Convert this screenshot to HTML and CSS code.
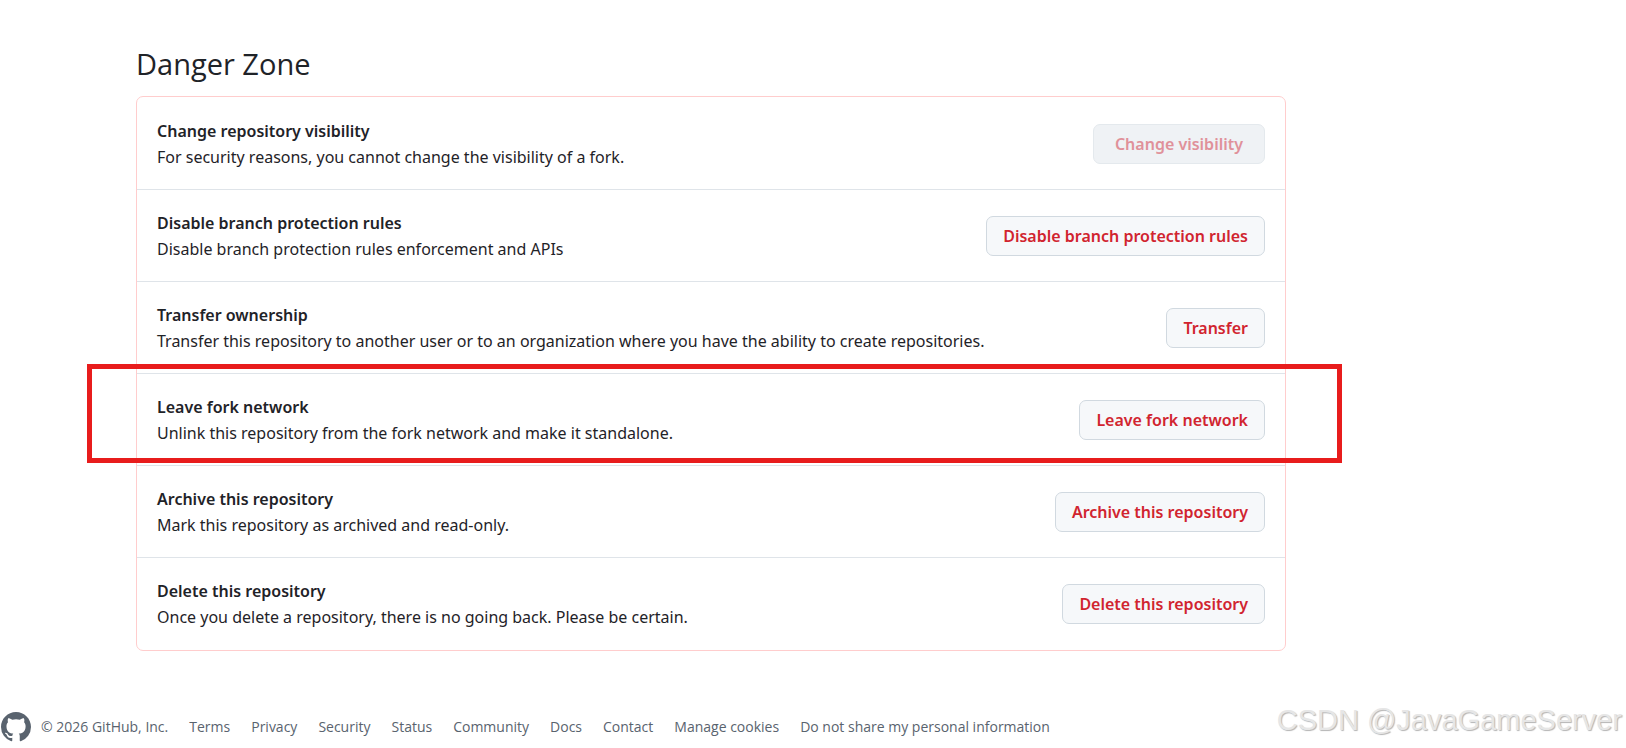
FILE: index.html
```html
<!DOCTYPE html>
<html lang="en">
<head>
  <meta charset="UTF-8" />
  <meta name="viewport" content="width=device-width, initial-scale=1.0"/>
  <title>Repository settings</title>
  <link rel="stylesheet" href="styles.css">
</head>
<body>

  <main class="settings">
    <h2 class="settings-title">Danger Zone</h2>

    <ul class="danger-box">
      <li class="danger-row">
        <div class="danger-text">
          <strong>Change repository visibility</strong>
          <p>For security reasons, you cannot change the visibility of a fork.</p>
        </div>
        <button class="btn btn-wide" type="button" disabled>Change visibility</button>
      </li>
      <li class="danger-row">
        <div class="danger-text">
          <strong>Disable branch protection rules</strong>
          <p>Disable branch protection rules enforcement and APIs</p>
        </div>
        <button class="btn" type="button">Disable branch protection rules</button>
      </li>
      <li class="danger-row">
        <div class="danger-text">
          <strong>Transfer ownership</strong>
          <p>Transfer this repository to another user or to an organization where you have the ability to create repositories.</p>
        </div>
        <button class="btn" type="button">Transfer</button>
      </li>
      <li class="danger-row marked">
        <div class="danger-text">
          <strong>Leave fork network</strong>
          <p>Unlink this repository from the fork network and make it standalone.</p>
        </div>
        <button class="btn" type="button">Leave fork network</button>
      </li>
      <li class="danger-row">
        <div class="danger-text">
          <strong>Archive this repository</strong>
          <p>Mark this repository as archived and read-only.</p>
        </div>
        <button class="btn" type="button">Archive this repository</button>
      </li>
      <li class="danger-row">
        <div class="danger-text">
          <strong>Delete this repository</strong>
          <p>Once you delete a repository, there is no going back. Please be certain.</p>
        </div>
        <button class="btn" type="button">Delete this repository</button>
      </li>
    </ul>
  </main>

  <footer class="footer">
    <a class="footer-logo" href="#" aria-label="GitHub">
      <svg viewBox="0 0 16 16" width="30" height="30" aria-hidden="true">
        <path fill="currentColor" d="M8 0c4.42 0 8 3.58 8 8a8.013 8.013 0 0 1-5.45 7.59c-.4.08-.55-.17-.55-.38 0-.27.01-1.13.01-2.2 0-.75-.25-1.23-.54-1.48 1.78-.2 3.65-.88 3.65-3.95 0-.88-.31-1.59-.82-2.15.08-.2.36-1.02-.08-2.12 0 0-.67-.22-2.2.82-.64-.18-1.32-.27-2-.27-.68 0-1.36.09-2 .27-1.53-1.03-2.2-.82-2.2-.82-.44 1.1-.16 1.92-.08 2.12-.51.56-.82 1.28-.82 2.15 0 3.06 1.86 3.75 3.64 3.95-.23.2-.44.55-.51 1.07-.46.21-1.61.55-2.33-.66-.15-.24-.6-.83-1.23-.82-.67.01-.27.38.01.53.34.19.73.9.82 1.13.16.45.68 1.31 2.69.94 0 .67.01 1.3.01 1.49 0 .21-.15.45-.55.38A7.995 7.995 0 0 1 0 8c0-4.42 3.58-8 8-8Z"/>
      </svg>
    </a>
    <span class="copyright">© 2026 GitHub, Inc.</span>
    <nav class="footer-links">
      <a href="#">Terms</a>
      <a href="#">Privacy</a>
      <a href="#">Security</a>
      <a href="#">Status</a>
      <a href="#">Community</a>
      <a href="#">Docs</a>
      <a href="#">Contact</a>
      <a href="#">Manage cookies</a>
      <a href="#">Do not share my personal information</a>
    </nav>
    <span class="watermark">CSDN @JavaGameServer</span>
  </footer>

</body>
</html>
```
FILE: styles.css
```css
* { margin: 0; padding: 0; box-sizing: border-box; }

body {
  background: #fff;
  color: #1f2328;
  font-family: "Noto Sans", "Segoe UI", sans-serif;
  font-size: 16px;
  line-height: 26px;
}

.settings {
  max-width: 1286px;
  padding: 43px 0 0 136px;
}

.settings-title {
  font-family: "Open Sans", "Segoe UI", sans-serif;
  font-size: 29px;
  font-weight: 400;
  line-height: 42px;
  margin-bottom: 11px;
}

.danger-box {
  list-style: none;
  padding: 1px 0;
  border: 1px solid #ffcdcd;
  border-radius: 7px;
}

.danger-row {
  position: relative;
  display: flex;
  align-items: center;
  justify-content: space-between;
  gap: 20px;
  padding: 20px 20px 19px;
}

.danger-row + .danger-row {
  border-top: 1px solid #dfe4e9;
}

.danger-text strong {
  display: block;
  font-weight: 600;
}

/* hand-drawn style frame over the fork row */
.marked::after {
  content: "";
  position: absolute;
  top: -10px;
  right: -57px;
  bottom: 2px;
  left: -50px;
  border: 5px solid #e81c1c;
  pointer-events: none;
}

.btn {
  flex-shrink: 0;
  height: 40px;
  padding: 0 16px;
  background: #f6f8fa;
  border: 1px solid #d1d9e0;
  border-radius: 7px;
  color: #d1242f;
  font-family: inherit;
  font-size: 16px;
  font-weight: 600;
  cursor: pointer;
}

.btn-wide {
  padding: 0 21px;
}

.btn:disabled {
  background: #eff2f5;
  border-color: #e4e9ed;
  color: #e0919a;
  cursor: default;
}

.footer {
  display: flex;
  align-items: center;
  margin-top: 61px;
  padding: 0 4px 0 1px;
  color: #59636e;
  font-family: "Open Sans", "Segoe UI", sans-serif;
  font-size: 14px;
}

.footer-logo {
  display: flex;
  margin-right: 10px;
  color: #59636e;
}

.copyright {
  margin-right: 21px;
}

.footer-links {
  display: flex;
  gap: 21px;
}

.footer-links a {
  color: inherit;
  text-decoration: none;
}

.watermark {
  align-self: flex-start;
  margin-left: auto;
  color: #e6e6e6;
  font-family: "Liberation Sans", Arial, sans-serif;
  font-size: 29px;
  line-height: 16px;
  text-shadow: 1px 1px 1px #b4b4b4;
}
```
